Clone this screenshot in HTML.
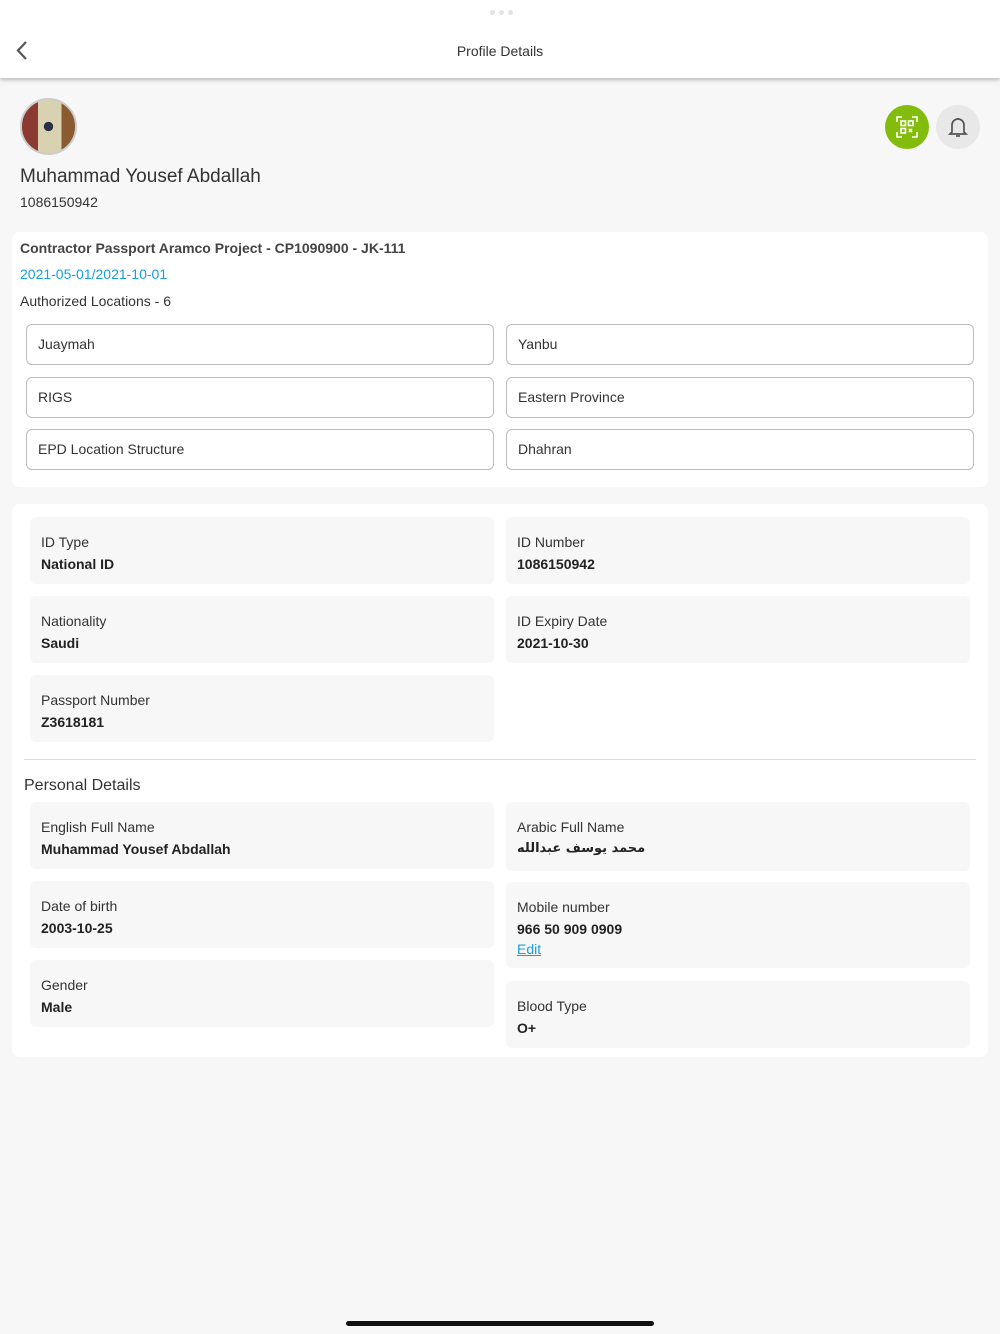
<!DOCTYPE html>
<html><head><meta charset="utf-8"><style>
*{box-sizing:border-box;margin:0;padding:0}
body{width:1000px;height:1334px;background:#f7f7f7;font-family:"Liberation Sans","Noto Sans CJK SC",sans-serif;color:#222;position:relative;overflow:hidden}
.a{position:absolute}
.hdr{left:0;top:0;width:1000px;height:78px;background:#fff;box-shadow:0 2px 4px rgba(0,0,0,.25)}
.card{background:#fff;border-radius:8px}
.loc{position:absolute;height:41px;border:1px solid #bdbdbd;border-radius:6px;font-size:14px;color:#333;padding-left:11px;line-height:39px;width:468px}
.t{position:absolute;background:#f7f7f7;border-radius:6px;width:464px;padding:0 11px}
.t .l{position:absolute;left:11px;top:17px;font-size:14px;color:#333}
.t .v{position:absolute;left:11px;top:39px;font-size:14px;font-weight:bold;color:#222}
</style></head><body>
<div class="a hdr">
<div class="a" style="left:490px;top:10px;display:flex;gap:4px"><span style="width:5px;height:5px;border-radius:50%;background:#e4e4e4"></span><span style="width:5px;height:5px;border-radius:50%;background:#e4e4e4"></span><span style="width:5px;height:5px;border-radius:50%;background:#e4e4e4"></span></div>
<svg class="a" style="left:14px;top:40px" width="16" height="22" viewBox="0 0 16 22"><path d="M12 2 L4 10.5 L12 19" fill="none" stroke="#555" stroke-width="2.2"/></svg>
<div class="a" style="left:0;width:1000px;top:43px;text-align:center;font-size:14px;color:#333">Profile Details</div>
</div>
<div class="a" style="left:20px;top:98px;width:57px;height:57px;border-radius:50%;border:2px solid #ccc;background:radial-gradient(circle at 50% 50%,#2a2f45 0 12%,transparent 13%),linear-gradient(90deg,#8a3a30 0 30%,#d8d2b0 30% 75%,#8a5a30 75%);overflow:hidden"></div>
<div class="a" style="left:885px;top:105px;width:44px;height:44px;border-radius:50%;background:#84bc0d"></div>
<svg class="a" style="left:896px;top:116px" width="22" height="22" viewBox="0 0 22 22" fill="none" stroke="#fff" stroke-width="1.6"><path d="M1 6V1h5M16 1h5v5M21 16v5h-5M6 21H1v-5"/><rect x="5" y="5" width="4.5" height="4.5"/><rect x="12.5" y="5" width="4.5" height="4.5"/><rect x="5" y="12.5" width="4.5" height="4.5"/><path d="M13 13l3 3M16 13l-3 3"/></svg>
<div class="a" style="left:936px;top:105px;width:44px;height:44px;border-radius:50%;background:#e8e8e8"></div>
<svg class="a" style="left:948px;top:116px" width="20" height="22" viewBox="0 0 20 22" fill="none" stroke="#555" stroke-width="1.7"><path d="M4 16V9a6 6 0 0 1 12 0v7l2 2H2z"/><path d="M8 20h4"/><path d="M10 2v1"/></svg>
<div class="a" style="left:20px;top:166px;font-size:19px;color:#333">Muhammad Yousef Abdallah</div>
<div class="a" style="left:20px;top:194px;font-size:14px;color:#333">1086150942</div>

<div class="a card" style="left:12px;top:232px;width:976px;height:255px"></div>
<div class="a" style="left:20px;top:240px;font-size:14px;font-weight:bold;color:#444">Contractor Passport Aramco Project - CP1090900 - JK-111</div>
<div class="a" style="left:20px;top:266px;font-size:14px;color:#1a9fd9">2021-05-01/2021-10-01</div>
<div class="a" style="left:20px;top:293px;font-size:14px;color:#333">Authorized Locations - 6</div>
<div class="loc" style="left:26px;top:324px">Juaymah</div>
<div class="loc" style="left:506px;top:324px">Yanbu</div>
<div class="loc" style="left:26px;top:377px">RIGS</div>
<div class="loc" style="left:506px;top:377px">Eastern Province</div>
<div class="loc" style="left:26px;top:429px">EPD Location Structure</div>
<div class="loc" style="left:506px;top:429px">Dhahran</div>

<div class="a card" style="left:12px;top:504px;width:976px;height:553px"></div>
<div class="t" style="left:30px;top:517px;height:67px"><div class="l">ID Type</div><div class="v">National ID</div></div>
<div class="t" style="left:506px;top:517px;height:67px"><div class="l">ID Number</div><div class="v">1086150942</div></div>
<div class="t" style="left:30px;top:596px;height:67px"><div class="l">Nationality</div><div class="v">Saudi</div></div>
<div class="t" style="left:506px;top:596px;height:67px"><div class="l">ID Expiry Date</div><div class="v">2021-10-30</div></div>
<div class="t" style="left:30px;top:675px;height:67px"><div class="l">Passport Number</div><div class="v">Z3618181</div></div>
<div class="a" style="left:24px;top:759px;width:952px;height:1px;background:#ddd"></div>
<div class="a" style="left:24px;top:777px;font-size:16px;color:#333">Personal Details</div>
<div class="t" style="left:30px;top:802px;height:67px"><div class="l">English Full Name</div><div class="v">Muhammad Yousef Abdallah</div></div>
<div class="t" style="left:506px;top:802px;height:69px"><div class="l">Arabic Full Name</div><div class="v" style="font-family:'DejaVu Sans',sans-serif;font-size:13px">محمد يوسف عبدالله</div></div>
<div class="t" style="left:30px;top:881px;height:67px"><div class="l">Date of birth</div><div class="v">2003-10-25</div></div>
<div class="t" style="left:506px;top:882px;height:86px"><div class="l">Mobile number</div><div class="v">966 50 909 0909</div><div class="a" style="left:11px;top:59px;font-size:14px;color:#1a9fd9;text-decoration:underline">Edit</div></div>
<div class="t" style="left:30px;top:960px;height:67px"><div class="l">Gender</div><div class="v">Male</div></div>
<div class="t" style="left:506px;top:981px;height:67px"><div class="l">Blood Type</div><div class="v">O+</div></div>

<div class="a" style="left:346px;top:1321px;width:308px;height:5px;border-radius:3px;background:#111"></div>
</body></html>
